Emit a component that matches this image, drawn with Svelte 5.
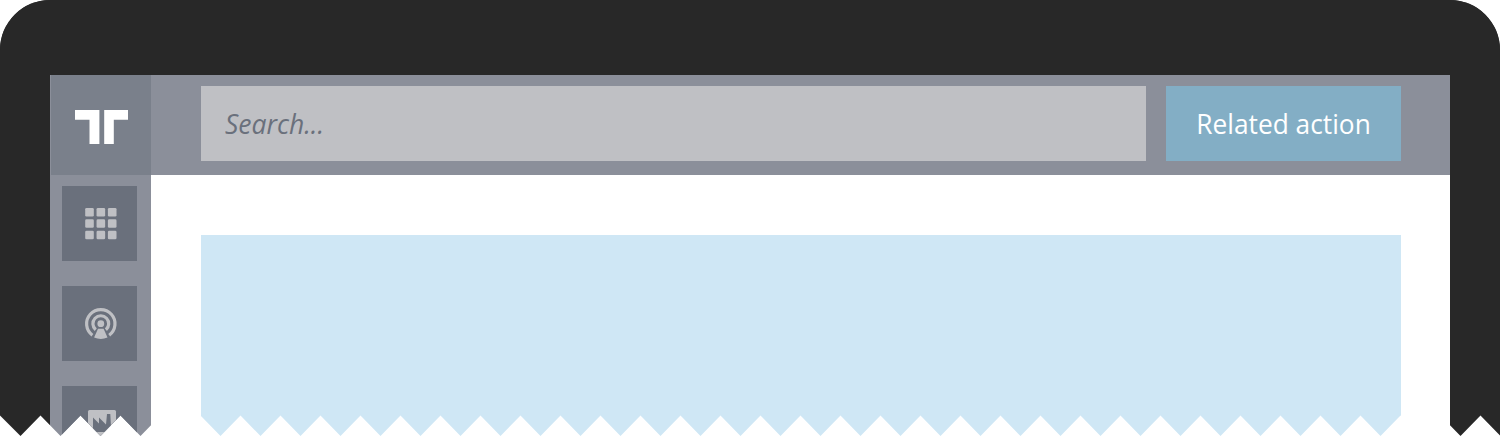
<script>
  const step = 20;
  const count = 75;
  const points = ['0 0', '0 415.5px'];
  for (let i = 1; i <= count; i++) {
    points.push(`${i * step + 0.5}px ${i % 2 ? 436 : 415.5}px`);
  }
  points.push('1500px 0');
  const tornEdge = `polygon(${points.join(', ')})`;
  const cells = [0, 11.35, 22.7];
</script>

<div class="device" style:clip-path={tornEdge}>
  <div class="screen">
    <aside>
      <div class="logo">
        <svg width="54" height="36" viewBox="0 0 54 36" fill="#fff">
          <path d="M1 1h24.4v34H15.5V10.7H1zM30.2 1H54v9.7H39.8V35h-9.6z" />
        </svg>
      </div>
      <nav>
        <div class="tile">
          <svg width="75" height="75" viewBox="0 0 75 75" fill="#bfc0c4">
            {#each cells as y}
              {#each cells as x}
                <rect x={x + 23.2} y={y + 22} width="8.6" height="8.5" rx="1.3" />
              {/each}
            {/each}
          </svg>
        </div>
        <div class="tile">
          <svg width="75" height="75" viewBox="0 0 75 75">
            <g fill="none" stroke="#bfc0c4" stroke-width="3.2">
              <path d="M30.4 49.2A14.2 14.2 0 1 1 47.2 49.2" />
              <path d="M33.7 43.7A7.9 7.9 0 1 1 43.9 43.7" />
            </g>
            <circle cx="38.8" cy="37.7" r="3.4" fill="#bfc0c4" />
            <path d="M36 42.8h5.6l3.9 8.8Q38.8 54.5 32.1 51.6z" fill="#bfc0c4" />
          </svg>
        </div>
        <div class="tile">
          <svg width="75" height="75" viewBox="0 0 75 75">
            <rect x="26" y="24" width="28" height="28" rx="1.5" fill="#bfc0c4" />
            <path d="M31 31.5l6 6v-6l7 7 1-10.5h3.3l1 18H31z" fill="#6a707c" />
          </svg>
        </div>
      </nav>
    </aside>
    <main>
      <header>
        <div class="search"><span>Search...</span></div>
        <button><span>Related action</span></button>
      </header>
      <section></section>
    </main>
  </div>
</div>

<style>
  :global(body) {
    margin: 0;
    background: #fff;
    overflow: hidden;
  }
  .device {
    box-sizing: border-box;
    width: 1500px;
    height: 437px;
    border: solid #282828;
    border-width: 75px 50px 0;
    border-radius: 50px 50px 0 0;
    font-family: "Open Sans", sans-serif;
  }
  .screen {
    display: flex;
    height: 362px;
    background: #fff;
  }
  aside {
    box-sizing: border-box;
    flex: 0 0 101px;
    height: 362px;
    padding-left: 1px;
    background: #8b8f9a;
    overflow: hidden;
  }
  .logo {
    display: grid;
    place-items: center;
    width: 100px;
    height: 100px;
    padding-top: 4px;
    box-sizing: border-box;
    background: #7a808b;
  }
  nav {
    display: flex;
    flex-direction: column;
    gap: 25px;
    padding: 11px 0 0 11px;
  }
  .tile {
    width: 75px;
    height: 75px;
    background: #6a707c;
  }
  svg {
    display: block;
  }
  main {
    flex: 1;
  }
  header {
    box-sizing: border-box;
    display: flex;
    gap: 20px;
    height: 100px;
    padding: 11px 49px 14px 50px;
    background: #8b8f9a;
  }
  .search {
    box-sizing: border-box;
    flex: 1;
    padding-left: 24px;
    background: #bfc0c4;
    color: #6a707c;
    font-size: 27.3px;
    font-style: italic;
    line-height: 76px;
  }
  .search span {
    display: inline-block;
    transform: scaleX(0.97);
    transform-origin: left;
  }
  button {
    width: 235px;
    padding: 0 0 1px;
    border: 0;
    background: #83aec5;
    color: #fff;
    font: 27.3px "Open Sans", sans-serif;
    white-space: nowrap;
  }
  button span {
    display: inline-block;
    transform: scaleX(0.963);
  }
  section {
    height: 202px;
    margin: 60px 49px 0 50px;
    background: #cfe7f5;
  }
</style>
